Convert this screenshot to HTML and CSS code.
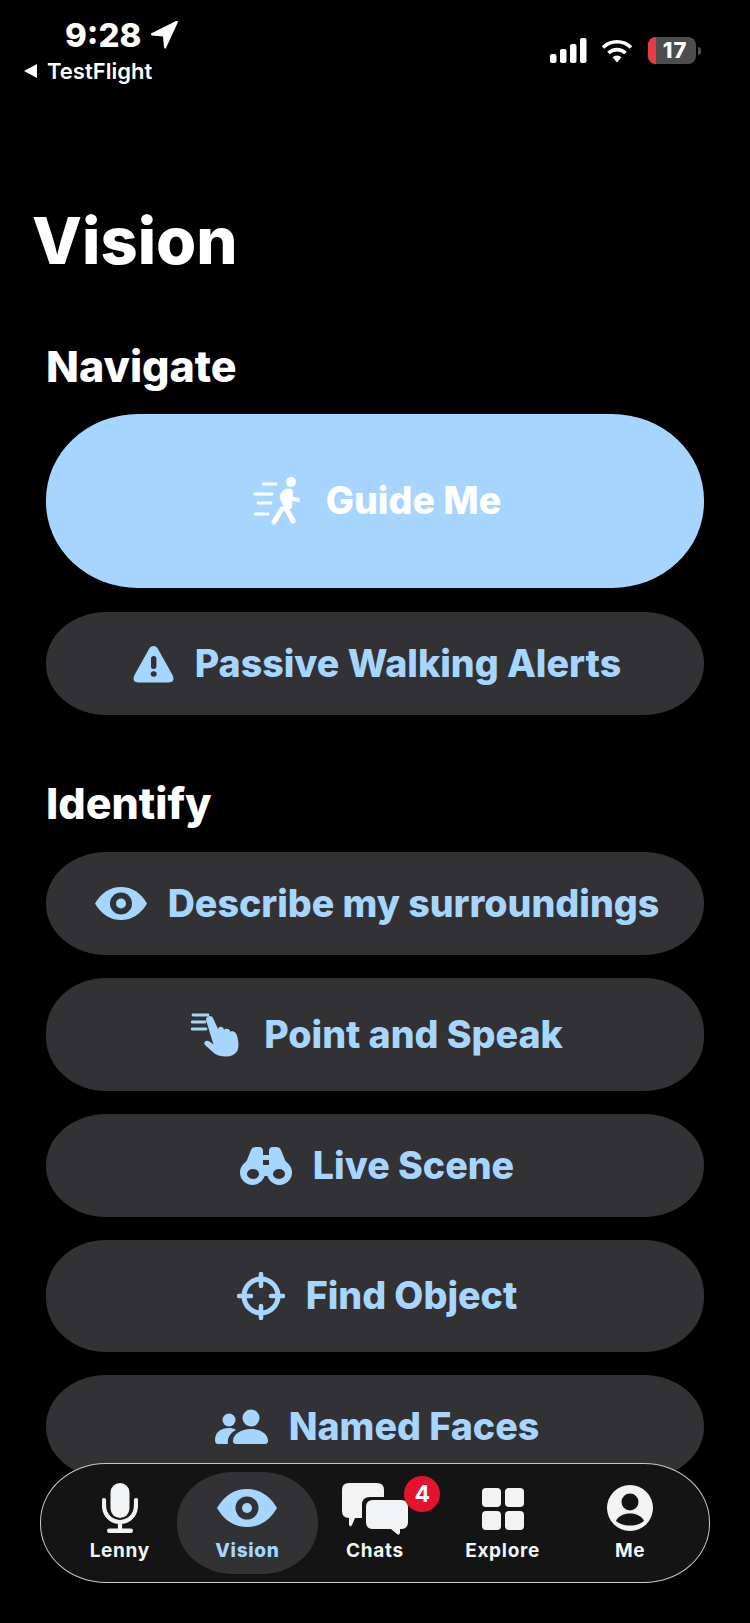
FILE: index.html
```html
<!DOCTYPE html>
<html lang="en">
<head>
<meta charset="utf-8">
<title>Vision</title>
<link rel="stylesheet" href="styles.css">
</head>
<body>
<div class="screen">
  <header class="status">
    <div class="status-left">
      <div class="clock"><span>9:28</span>
        <svg class="loc" viewBox="0 0 28 28"><path d="M27 1 15 27q-1 1.500-2-.5l-1-11-11-1q-2-1-.5-2.200L25 0q2-.5 2 1Z" fill="#fff"/></svg>
      </div>
      <div class="back"><svg class="back-tri" viewBox="0 0 14 14"><path d="M0 7 13 0v14Z" fill="#fff"/></svg><span>TestFlight</span></div>
    </div>
    <div class="status-right">
      <svg class="signal" viewBox="0 0 37 25"><g fill="#fff"><rect x="0" y="16" width="6.500" height="9" rx="2"/><rect x="10" y="11" width="6.500" height="14" rx="2"/><rect x="20" y="6" width="6.500" height="19" rx="2"/><rect x="30" y="0" width="6.500" height="25" rx="2"/></g></svg>
      <svg class="wifi" viewBox="0 0 32 24"><g fill="none" stroke="#fff" stroke-width="3.600"><path d="M2 8.500a20 20 0 0 1 28 0"/><path d="M7.500 14a12.500 12.500 0 0 1 17 0"/></g><path d="M11.500 18.200a6.500 6.500 0 0 1 9 0L16 23.500Z" fill="#fff"/></svg>
      <div class="battery"><i class="battery-low"></i><b class="battery-num">17</b></div><i class="battery-nub"></i>
    </div>
  </header>

  <main class="content">
    <h1 class="title">Vision</h1>
    <section class="group">
      <h2 class="group-title">Navigate</h2>
      <div class="stack">
        <button class="btn btn-primary"><svg class="ic ic-walk" viewBox="0 0 52 48"><g fill="none" stroke="#fff" stroke-linecap="round" stroke-width="2.800"><path d="M10 7h13M1.500 17H19M5 26h13M2 37h13"/><path d="M36 21l9 2" stroke-width="4"/><path d="M29 32l-8 13M33 31l7 13" stroke-width="5"/></g><circle cx="38" cy="5" r="5" fill="#fff"/><path d="M33 12q6-1.500 7 2l-1 17q-4 3-8-1-5-8-4-12 2-5 6-6Z" fill="#fff"/></svg><span>Guide Me</span></button>
        <button class="btn btn-passive"><svg class="ic ic-warn" viewBox="0 0 41 38"><path d="M20.500 1q3 0 4.500 3l14.500 26q3 7-3.500 7.500H5Q-1.500 37 1.500 30L16 4q1.500-3 4.500-3Z" fill="#a6d6ff"/><rect x="18" y="11" width="5.400" height="13" rx="2.700" fill="#323234"/><ellipse cx="20.700" cy="29" rx="3" ry="2.700" fill="#323234"/></svg><span>Passive Walking Alerts</span></button>
      </div>
    </section>
    <section class="group group-identify">
      <h2 class="group-title">Identify</h2>
      <div class="stack">
        <button class="btn btn-describe"><svg class="ic ic-eye" viewBox="0 0 52 33"><path d="M0 16.500C6 6 15 0 26 0s20 6 26 16.500C46 27 37 33 26 33S6 27 0 16.500Z" fill="#a6d6ff"/><circle cx="26" cy="16.500" r="11" fill="#323234"/><circle cx="26" cy="16.500" r="5" fill="#a6d6ff"/></svg><span>Describe my surroundings</span></button>
        <button class="btn btn-point"><svg class="ic ic-hand" viewBox="0 0 52 44"><g fill="none" stroke="#a6d6ff" stroke-linecap="round" stroke-width="2.800"><path d="M2 2h15M1 9h13M1 16h14"/></g><path d="M15 7q0-4 4-4 2 0 3 2l5 11q1-3 4-2 2 1 2 3 1-2 4-1 2 .5 2.500 3 1-1.500 3-.5 3 1 4 6 2 8 0 13-3 6-12 6-7 0-11-3l-9-8q-2-2-1-3.500 2-2 5-.5l4 3Z" fill="#a6d6ff"/></svg><span>Point and Speak</span></button>
        <button class="btn btn-live"><svg class="ic ic-bino" viewBox="0 0 52 38"><g fill="#a6d6ff"><path d="M11 3q1-3 5-3h3q4 0 4 4v22H.5L7 13Z"/><circle cx="12.500" cy="25.500" r="12.500"/><path d="M41 3q-1-3-5-3h-3q-4 0-4 4v22h22.500L45 13Z"/><circle cx="39.500" cy="25.500" r="12.500"/><rect x="22" y="8" width="8" height="21"/></g><rect x="23" y="13" width="6" height="5" fill="#323234"/><ellipse cx="13" cy="27" rx="6" ry="5" fill="#323234"/><ellipse cx="39" cy="27" rx="6" ry="5" fill="#323234"/></svg><span>Live Scene</span></button>
        <button class="btn btn-find"><svg class="ic ic-cross" viewBox="0 0 48 48"><circle cx="24" cy="24" r="17" fill="none" stroke="#a6d6ff" stroke-width="5"/><g stroke="#a6d6ff" stroke-width="4.500" stroke-linecap="round"><path d="M24 2v12M24 34v12M2 24h12M34 24h12"/></g></svg><span>Find Object</span></button>
        <button class="btn btn-faces"><svg class="ic ic-people" viewBox="0 0 53 35"><circle cx="14" cy="11" r="6.500" fill="#a6d6ff"/><circle cx="36" cy="9" r="8.500" fill="#a6d6ff"/><path d="M0 31c0-8 6-12 14-12 3 0 5 .5 7 2-6 3-9 8-8 14H3q-3 0-3-4Z" fill="#a6d6ff"/><path d="M21 35q-3 0-3-3c0-7 8-12 18-12s17 5 17 12q0 3-3 3Z" fill="#a6d6ff"/></svg><span>Named Faces</span></button>
      </div>
    </section>
  </main>

  <nav class="tabbar">
    <a class="tab">
      <svg class="tab-ic ic-mic" viewBox="0 0 36 50"><rect x="8.500" y="0" width="19" height="35" rx="9.500" fill="#f2f3f5"/><path d="M2 17v5c0 10 7 17 16 17s16-7 16-17v-5M18 39v8" fill="none" stroke="#f2f3f5" stroke-width="4.200" stroke-linecap="round"/><rect x="5" y="45.500" width="26" height="4.500" rx="2.200" fill="#f2f3f5"/></svg>
      <span>Lenny</span>
    </a>
    <a class="tab tab-active">
      <svg class="tab-ic ic-eye-nav" viewBox="0 0 60 38"><path d="M0 19C7 7 17 0 30 0s23 7 30 19C53 31 43 38 30 38S7 31 0 19Z" fill="#a6d6ff"/><circle cx="30" cy="19" r="11.500" fill="#323234"/><circle cx="30" cy="19" r="5" fill="#a6d6ff"/></svg>
      <span>Vision</span>
    </a>
    <a class="tab">
      <svg class="tab-ic ic-chat" viewBox="0 0 66 52"><path d="M7 0h28q7 0 7 7v7H28q-8 0-8 8v13h-7l-3 7q-2 3-3-.5V35Q0 35 0 28V7q0-7 7-7Z" fill="#f2f3f5"/><path d="M31 17h28q7 0 7 7v15q0 7-7 7h-1v4q-1 3-3 1l-6-5H31q-7 0-7-7V24q0-7 7-7Z" fill="#f2f3f5"/></svg>
      <span>Chats</span>
      <b class="badge">4</b>
    </a>
    <a class="tab">
      <span class="tab-ic ic-grid"><i></i><i></i><i></i><i></i></span>
      <span>Explore</span>
    </a>
    <a class="tab">
      <svg class="tab-ic ic-me" viewBox="0 0 46 46"><circle cx="23" cy="23" r="23" fill="#f2f3f5"/><circle cx="23" cy="17" r="8.500" fill="#141415"/><path d="M9 36c2-5 8-7.500 14-7.500S35 31 37 36c-3.500 3-8.500 4.500-14 4.500S12.500 39 9 36Z" fill="#141415"/></svg>
      <span>Me</span>
    </a>
  </nav>
</div>
</body>
</html>
```
FILE: styles.css
```css
* { box-sizing: border-box; margin: 0; padding: 0; }
html, body { background: #000; }
body { width: 750px; height: 1623px; overflow: hidden; font-family: Inter, "Liberation Sans", sans-serif; color: #fff; }
.screen { position: relative; width: 750px; height: 1623px; overflow: hidden; background: #000; }

.status { display: flex; justify-content: space-between; align-items: flex-start; height: 90px; padding: 18px 49px 0 24px; }
.status-left { display: flex; flex-direction: column; }
.clock { display: flex; align-items: center; gap: 10px; padding-left: 41px; font-size: 33px; font-weight: 800; line-height: 34px; }
.loc { width: 28px; height: 28px; }
.back { display: flex; align-items: center; gap: 9px; margin-top: 6px; font-size: 22px; font-weight: 600; line-height: 26px; }
.back-tri { width: 14px; height: 14px; }
.status-right { display: flex; align-items: center; padding-top: 19px; }
.signal { width: 37px; height: 25px; }
.wifi { width: 32px; height: 24px; margin-left: 14px; }
.battery { position: relative; width: 48px; height: 27px; margin-left: 15px; border-radius: 8px; background: #4c4d4f; display: flex; align-items: center; justify-content: center; }
.battery-low { position: absolute; left: 0; top: 0; bottom: 0; width: 8px; border-radius: 8px 0 0 8px; background: #eb3a44; }
.battery-num { position: relative; font-size: 22px; font-weight: 800; line-height: 27px; letter-spacing: 1px; margin-left: 6px; }
.battery-nub { width: 3px; height: 8px; margin-left: 2px; border-radius: 0 3px 3px 0; background: #4c4d4f; }

.content { padding: 0 46px; }
.title { margin: 119px 0 0 -14px; font-size: 65px; font-weight: 800; line-height: 64px; letter-spacing: 0; }
.group-title { margin-top: 69px; font-size: 43px; font-weight: 800; line-height: 48px; }
.group-identify .group-title { margin-top: 64px; }
.stack { display: flex; flex-direction: column; gap: 24px; margin-top: 24px; }
.group-identify .stack { gap: 23px; margin-top: 25px; }

.btn { display: flex; align-items: center; justify-content: center; gap: 21px; width: 658px; padding-left: 4px; border: 0; border-radius: 60px / 51px; background: #323234; color: #a6d6ff; font-family: inherit; font-size: 37.600px; font-weight: 800; line-height: 44px; }
.btn-primary { height: 174px; border-radius: 92px / 86px; background: #a6d6ff; color: #fff; }
.btn-passive, .btn-describe, .btn-live { height: 103px; }
.btn-point { height: 113px; border-radius: 60px / 54px; }
.btn-find { height: 112px; border-radius: 60px / 54px; }
.btn-faces { height: 103px; }
.ic { flex: none; display: block; }
.ic-walk { width: 52px; height: 48px; }
.ic-warn { width: 41px; height: 38px; }
.ic-eye { width: 52px; height: 33px; }
.ic-hand { width: 52px; height: 44px; }
.ic-bino { width: 52px; height: 38px; }
.ic-cross { width: 48px; height: 48px; }
.ic-people { width: 53px; height: 35px; }

.tabbar { position: absolute; left: 40px; top: 1463px; display: grid; grid-template-columns: repeat(5, 127.6px); width: 670px; height: 120px; padding: 8px 0 0 15px; border: 1.500px solid #c9c9cb; border-radius: 66px / 59px; background: #141415; }
.tab { position: relative; display: flex; flex-direction: column; align-items: center; height: 102px; font-size: 19px; font-weight: 700; line-height: 24px; letter-spacing: .7px; color: #f2f3f5; }
.tab-active { margin: 0 -7px; border-radius: 56px / 50px; background: #323234; color: #a6d6ff; font-weight: 800; }
.tab-ic { display: block; flex: none; }
.ic-mic { width: 36px; height: 50px; margin: 11px 0 6px; }
.ic-eye-nav { width: 60px; height: 38px; margin: 17px 0 12px; }
.ic-chat { width: 66px; height: 52px; margin: 11px 0 4px; }
.ic-grid { display: grid; grid-template-columns: 19px 19px; grid-auto-rows: 19px; gap: 4px; margin: 16px 0 9px; }
.ic-grid i { border-radius: 4px; background: #f2f3f5; }
.ic-me { width: 46px; height: 46px; margin: 13px 0 8px; }
.badge { position: absolute; left: 93px; top: 4px; width: 36px; height: 36px; border-radius: 50%; background: #e5122f; color: #fff; font-size: 23px; font-weight: 700; line-height: 36px; text-align: center; letter-spacing: 0; }
```
